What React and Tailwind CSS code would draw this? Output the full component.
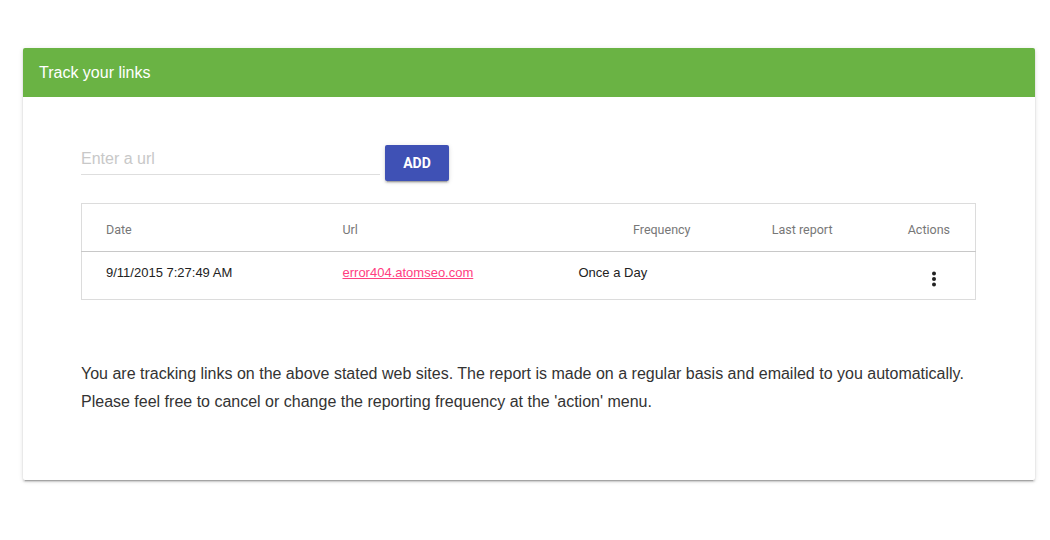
import React from 'react'

const KebabIcon = () => (
  <svg width="6" height="16" viewBox="0 0 6 16" className="block">
    <circle cx="3" cy="2.5" r="2" fill="#222" />
    <circle cx="3" cy="8" r="2" fill="#222" />
    <circle cx="3" cy="13.5" r="2" fill="#222" />
  </svg>
)

const rows = [{ date: '9/11/2015 7:27:49 AM', url: 'error404.atomseo.com', frequency: 'Once a Day', last: '' }]

const App = () => {
  return (
    <div className="w-[1050px] h-[540px] bg-white pt-[48px] pl-[23px] font-['Liberation_Sans',Arial,sans-serif]">
      <div className="w-[1012px] h-[432px] bg-white rounded-[2px] shadow-[0_2px_2px_0_rgba(0,0,0,0.14),0_3px_1px_-2px_rgba(0,0,0,0.2),0_1px_5px_0_rgba(0,0,0,0.12)] overflow-hidden">
        <div className="h-[49px] bg-[#6ab344] flex items-center px-4">
          <h2 className="text-white text-[16px] leading-none">Track your links</h2>
        </div>

        <div className="px-[58px] pt-[49px]">
          <div className="flex items-end gap-[5px]">
            <div className="w-[299px] border-b border-[#dedede] pb-[3px]">
              <input
                className="w-full outline-none text-[16px] leading-[20px] text-[#333] placeholder:text-[#c8c8c8] font-['Liberation_Sans',Arial,sans-serif]"
                placeholder="Enter a url"
              />
            </div>
            <button className="w-[64px] h-[36px] bg-[#3f51b5] text-white text-[14px] font-bold rounded-[2px] shadow-[0_2px_2px_0_rgba(0,0,0,0.14),0_3px_1px_-2px_rgba(0,0,0,0.2),0_1px_5px_0_rgba(0,0,0,0.12)] mb-[-7px] translate-y-[-1px] font-['Roboto',Arial,sans-serif]">
              ADD
            </button>
          </div>

          <table className="mt-[28px] w-[894px] border border-[#dcdcdc] border-collapse table-fixed">
            <colgroup>
              <col className="w-[243px]" />
              <col className="w-[236px]" />
              <col className="w-[148px]" />
              <col className="w-[142px]" />
              <col className="w-[125px]" />
            </colgroup>
            <thead>
              <tr className="h-[48px] border-b border-[#c8c8c8] text-[12.5px] text-[#777] font-['Roboto',Arial,sans-serif]">
                <th className="text-left font-normal pl-[24px] pt-[6px]">Date</th>
                <th className="text-left font-normal pl-[18px] pt-[6px]">Url</th>
                <th className="text-right font-normal pr-[18px] pt-[6px]">Frequency</th>
                <th className="text-right font-normal pr-[18px] pt-[6px]">Last report</th>
                <th className="text-right font-normal pr-[25px] pt-[6px]">Actions</th>
              </tr>
            </thead>
            <tbody>
              {rows.map((r, i) => (
                <tr key={i} className="h-[48px] text-[13px] text-[#222]">
                  <td className="pl-[24px] pb-[6px]">{r.date}</td>
                  <td className="pl-[18px] pb-[6px]">
                    <a href="#" className="text-[#ff4081] underline">{r.url}</a>
                  </td>
                  <td className="pl-[18px] pb-[6px]">{r.frequency}</td>
                  <td className="pb-[6px]">{r.last}</td>
                  <td className="pr-[38px] pt-[6px]">
                    <div className="flex justify-end">
                      <KebabIcon />
                    </div>
                  </td>
                </tr>
              ))}
            </tbody>
          </table>

          <div className="mt-[60px] text-[16px] leading-[28px] text-[#333]">
            <p>You are tracking links on the above stated web sites. The report is made on a regular basis and emailed to you automatically.</p>
            <p>Please feel free to cancel or change the reporting frequency at the 'action' menu.</p>
          </div>
        </div>
      </div>
    </div>
  )
}

export default App
